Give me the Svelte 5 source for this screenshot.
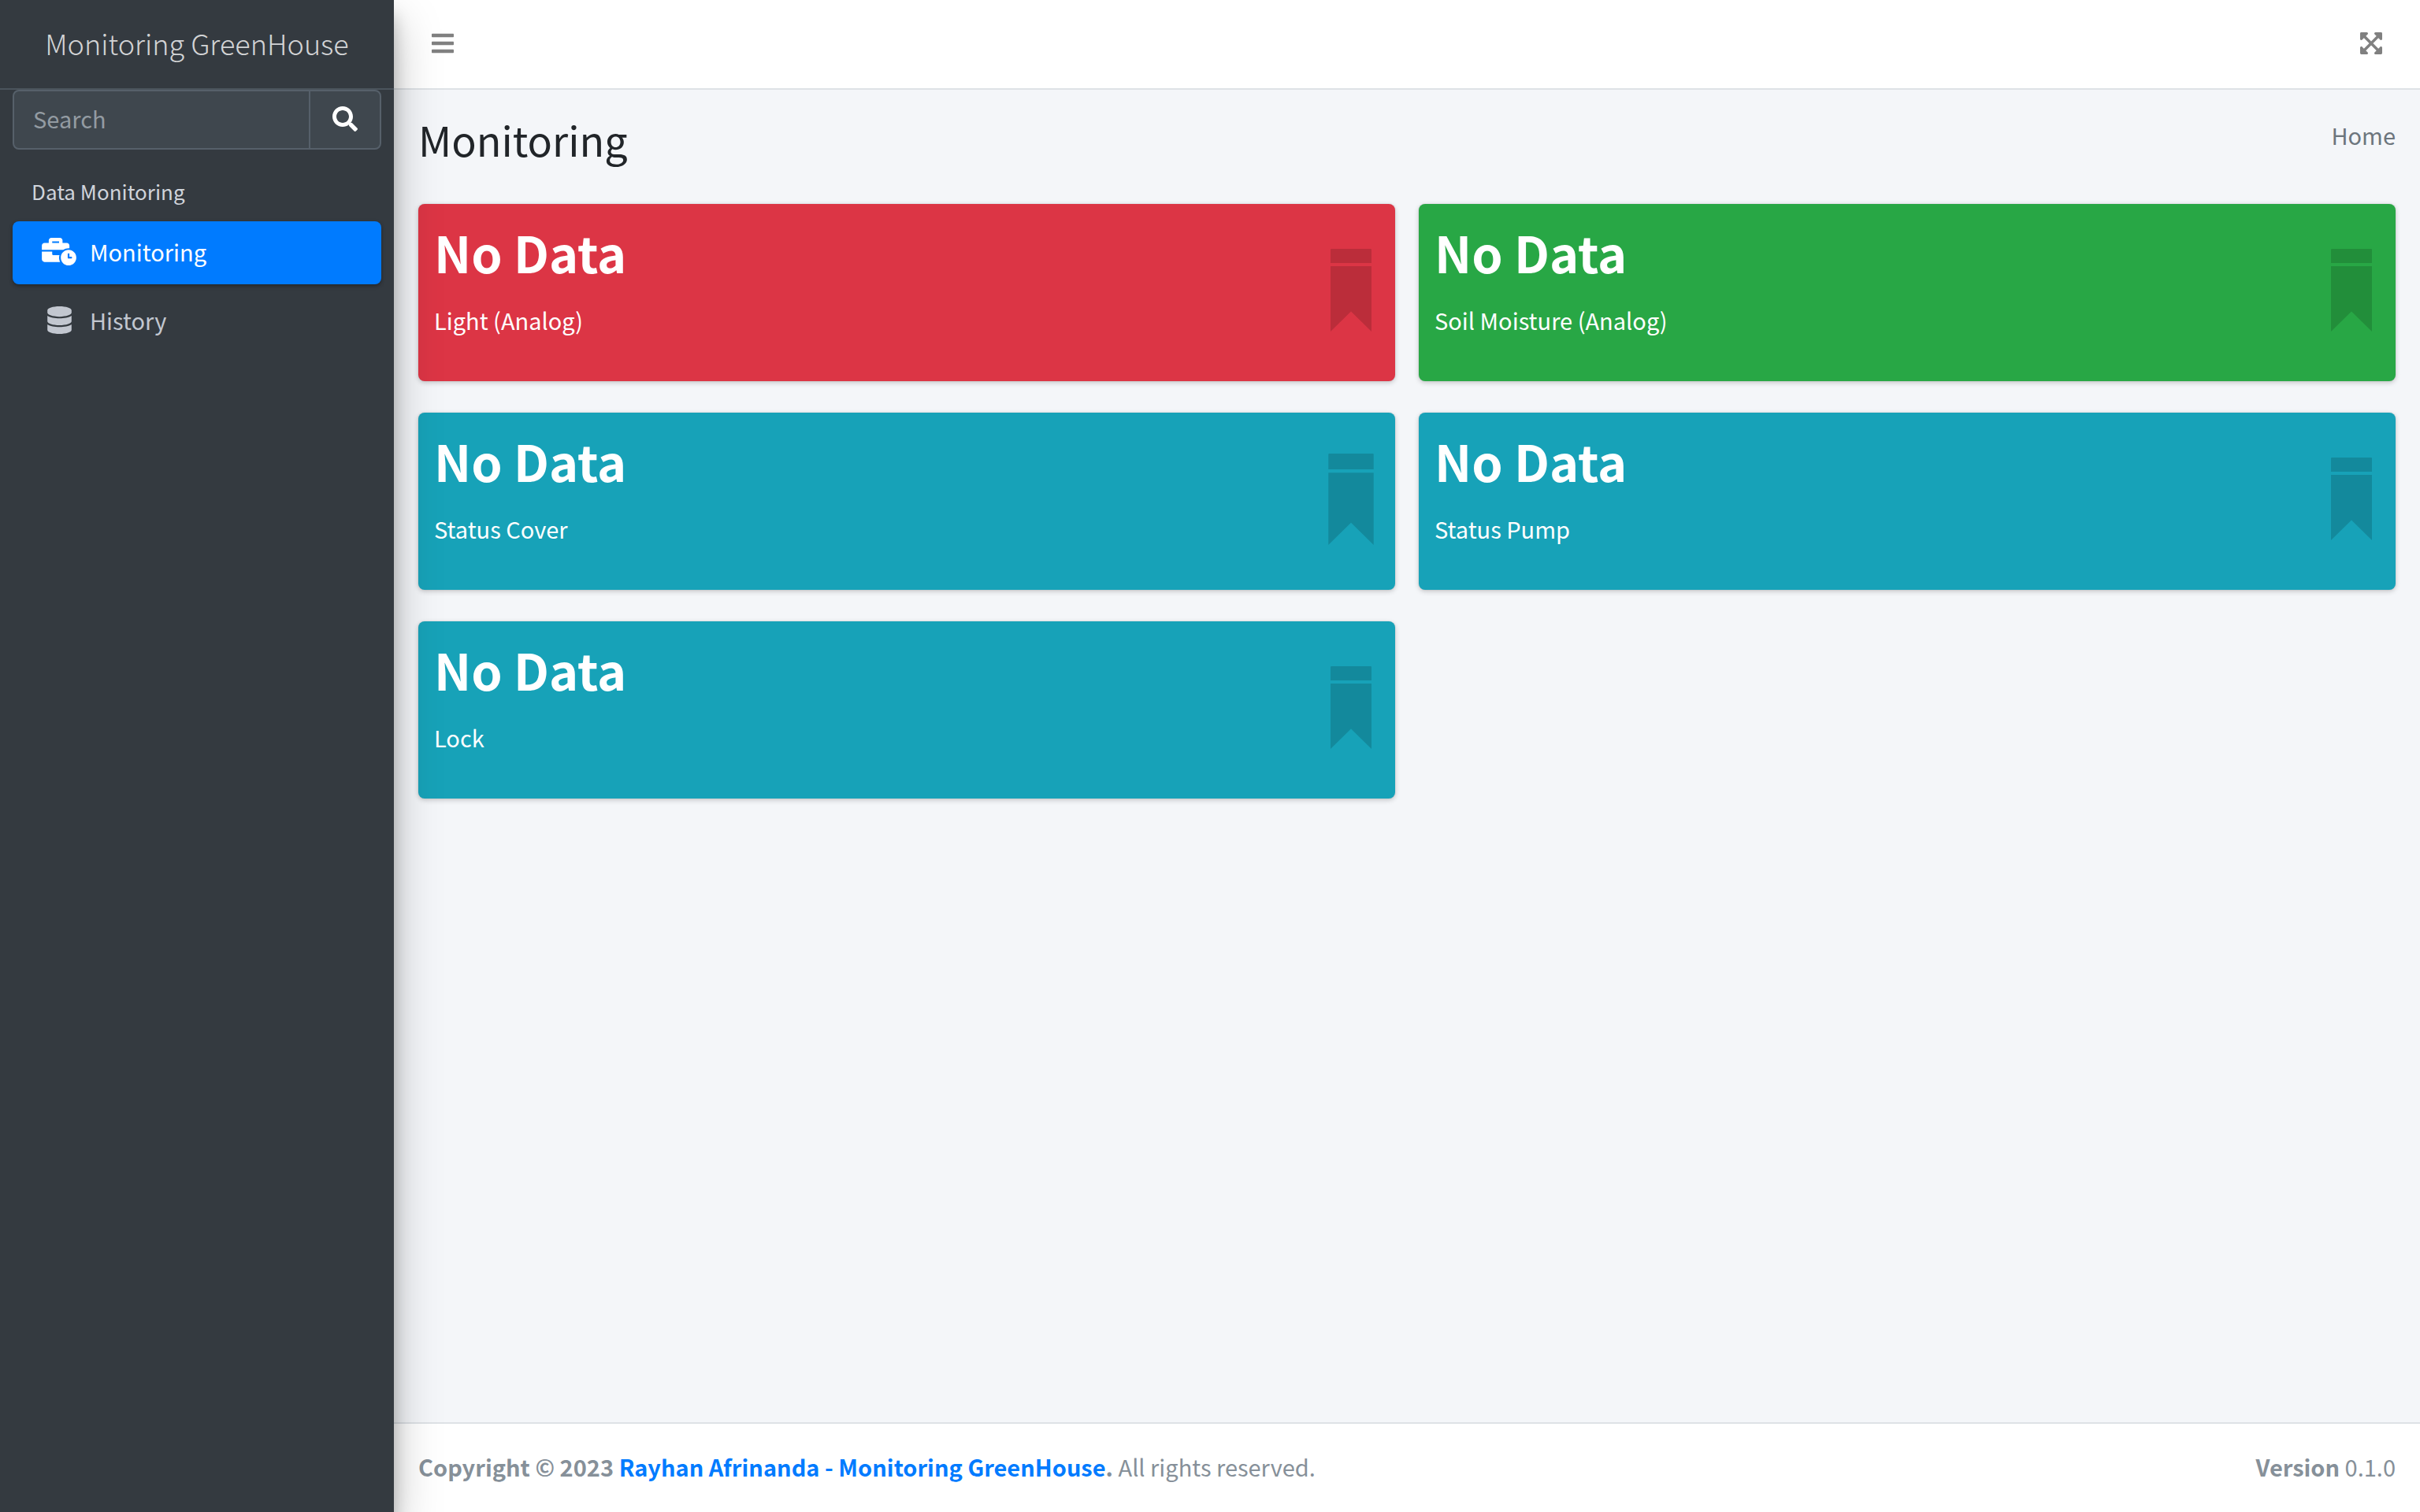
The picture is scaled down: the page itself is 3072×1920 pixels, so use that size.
<script>
  const cards = [
    { value: 'No Data', label: 'Light (Analog)', tone: 'danger' },
    { value: 'No Data', label: 'Soil Moisture (Analog)', tone: 'success' },
    { value: 'No Data', label: 'Status Cover', tone: 'info', enlarged: true },
    { value: 'No Data', label: 'Status Pump', tone: 'info' },
    { value: 'No Data', label: 'Lock', tone: 'info' }
  ];
</script>

<div class="wrapper">
  <aside class="sidebar">
    <a class="brand" href="#home">Monitoring GreenHouse</a>
    <div class="sidebar-body">
      <form class="search" role="search">
        <input type="search" placeholder="Search" aria-label="Search" />
        <button type="button" aria-label="Submit search">
          <svg class="icon-search" viewBox="0 0 512 512" aria-hidden="true"><path d="M505 442.700L405.300 343c-4.500-4.500-10.600-7-17-7H372c27.600-35.300 44-79.700 44-128C416 93.100 322.900 0 208 0S0 93.100 0 208s93.100 208 208 208c48.300 0 92.700-16.400 128-44v16.300c0 6.400 2.500 12.500 7 17l99.700 99.700c9.400 9.400 24.600 9.400 33.900 0l28.300-28.300c9.400-9.400 9.400-24.600.1-34zM208 336c-70.700 0-128-57.200-128-128 0-70.700 57.200-128 128-128 70.700 0 128 57.200 128 128 0 70.700-57.200 128-128 128z" /></svg>
        </button>
      </form>
      <nav aria-label="Data Monitoring">
        <h2 class="nav-header">Data Monitoring</h2>
        <ul>
          <li>
            <a class="nav-link active" href="#monitoring" aria-current="page">
              <span class="nav-icon"><svg class="icon-wide" viewBox="0 0 640 512" aria-hidden="true"><path d="M496 224c-79.590 0-144 64.410-144 144s64.410 144 144 144 144-64.410 144-144-64.410-144-144-144zm64 150.290c0 5.340-4.370 9.710-9.710 9.710h-60.570c-5.340 0-9.710-4.370-9.710-9.710v-76.570c0-5.340 4.370-9.710 9.710-9.710h12.570c5.340 0 9.710 4.370 9.710 9.710V352h38.290c5.340 0 9.710 4.370 9.710 9.710v12.580zM496 192c5.400 0 10.720.33 16 .81V144c0-25.600-22.400-48-48-48h-80V48c0-25.600-22.400-48-48-48H176c-25.600 0-48 22.400-48 48v48H48c-25.600 0-48 22.400-48 48v80h395.120c28.600-20.090 63.350-32 100.880-32zM320 96H192V64h128v32zm6.820 224H208c-8.840 0-16-7.160-16-16v-48H0v144c0 25.600 22.400 48 48 48h291.430C327.100 423.960 320 396.820 320 368c0-16.660 2.480-32.720 6.820-48z" /></svg></span>
              <span>Monitoring</span>
            </a>
          </li>
          <li>
            <a class="nav-link" href="#history">
              <span class="nav-icon"><svg class="icon-db" viewBox="0 0 448 512" aria-hidden="true"><path d="M448 73.143v45.714C448 159.143 347.667 192 224 192S0 159.143 0 118.857V73.143C0 32.857 100.333 0 224 0s224 32.857 224 73.143zM448 176v102.857C448 319.143 347.667 352 224 352S0 319.143 0 278.857V176c48.125 33.143 136.208 48.572 224 48.572S399.874 209.143 448 176zm0 160v102.857C448 479.143 347.667 512 224 512S0 479.143 0 438.857V336c48.125 33.143 136.208 48.572 224 48.572S399.874 369.143 448 336z" /></svg></span>
              <span>History</span>
            </a>
          </li>
        </ul>
      </nav>
    </div>
  </aside>

  <div class="page">
    <header class="topbar">
      <button type="button" aria-label="Toggle menu">
        <svg class="icon-bar" viewBox="0 0 448 512" aria-hidden="true"><path d="M16 132h416c8.837 0 16-7.163 16-16V76c0-8.837-7.163-16-16-16H16C7.163 60 0 67.163 0 76v40c0 8.837 7.163 16 16 16zm0 160h416c8.837 0 16-7.163 16-16v-40c0-8.837-7.163-16-16-16H16c-8.837 0-16 7.163-16 16v40c0 8.837 7.163 16 16 16zm0 160h416c8.837 0 16-7.163 16-16v-40c0-8.837-7.163-16-16-16H16c-8.837 0-16 7.163-16 16v40c0 8.837 7.163 16 16 16z" /></svg>
      </button>
      <button type="button" aria-label="Toggle full screen">
        <svg class="icon-bar" viewBox="0 0 448 512" aria-hidden="true"><path d="M448 344v112a23.940 23.940 0 0 1-24 24H312c-21.390 0-32.090-25.900-17-41l36.200-36.200L224 295.600 116.770 402.900 153 439c15.090 15.100 4.390 41-17 41H24a23.940 23.940 0 0 1-24-24V344c0-21.400 25.890-32.100 41-17l36.190 36.200L184.460 256 77.180 148.700 41 185c-15.100 15.100-41 4.400-41-17V56a23.940 23.940 0 0 1 24-24h112c21.390 0 32.090 25.900 17 41l-36.200 36.200L224 216.400l107.230-107.300L295 73c-15.090-15.100-4.390-41 17-41h112a23.940 23.940 0 0 1 24 24v112c0 21.400-25.890 32.100-41 17l-36.190-36.200L263.540 256l107.280 107.300L407 327.100c15.100-15.200 41-4.500 41 16.900z" /></svg>
      </button>
    </header>

    <main>
      <div class="content-header">
        <h1>Monitoring</h1>
        <nav aria-label="Breadcrumb"><a href="#home">Home</a></nav>
      </div>
      <div class="cards">
        {#each cards as card}
          <section class="card {card.tone}">
            <div>
              <h3>{card.value}</h3>
              <p>{card.label}</p>
            </div>
            <span class="card-icon">
              <svg class:enlarged={card.enlarged} viewBox="0 0 52 105" aria-hidden="true"><path d="M0 1q0-1 1-1h50q1 0 1 1v17H0zM0 22h52v83L26 79.500 0 105z" /></svg>
            </span>
          </section>
        {/each}
      </div>
    </main>

    <footer>
      <div><strong>Copyright © 2023 <a href="#author">Rayhan Afrinanda - Monitoring GreenHouse</a>.</strong> All rights reserved.</div>
      <div><b>Version</b> 0.1.0</div>
    </footer>
  </div>
</div>

<style>
  :global(body) {
    margin: 0;
    background: #f4f6f9;
  }
  .wrapper {
    display: flex;
    min-height: 100vh;
    font-family: 'Noto Sans CJK JP', 'Noto Sans', sans-serif;
    font-size: 29px;
    line-height: 48px;
    color: #212529;
  }
  .wrapper * {
    box-sizing: border-box;
  }
  svg {
    display: block;
    fill: currentColor;
  }
  a {
    text-decoration: none;
  }
  button {
    display: flex;
    align-items: center;
    justify-content: center;
    border: 0;
    background: none;
    cursor: pointer;
  }
  h1, h2, h3, p, ul {
    margin: 0;
    padding: 0;
    font-weight: 400;
    list-style: none;
  }

  .sidebar {
    position: relative;
    z-index: 2;
    flex: 0 0 500px;
    background: #343a40;
    box-shadow: 0 28px 56px rgba(0, 0, 0, 0.25), 0 20px 20px rgba(0, 0, 0, 0.22);
  }
  .brand {
    display: block;
    height: 114px;
    border-bottom: 2px solid #4b545c;
    font-size: 36px;
    font-weight: 300;
    line-height: 108px;
    text-align: center;
    color: rgba(255, 255, 255, 0.8);
  }
  .sidebar-body {
    padding: 0 16px;
  }
  .search {
    display: flex;
    height: 76px;
    border: 2px solid #56606a;
    border-radius: 8px;
    background: #3f474e;
    overflow: hidden;
  }
  .search input {
    flex: 1;
    min-width: 0;
    padding: 0 24px 4px;
    border: 0;
    background: none;
    font: inherit;
    color: #fff;
    outline: 0;
  }
  .search input::placeholder {
    color: #939ba2;
    opacity: 1;
  }
  .search button {
    width: 90px;
    padding: 0 0 2px;
    border-left: 2px solid #56606a;
    color: #fff;
  }
  .icon-search {
    width: 32px;
    height: 32px;
  }
  .nav-header {
    padding: 33px 24px 18px;
    font-size: 26px;
    line-height: 40px;
    color: #d0d4db;
  }
  ul {
    display: grid;
    gap: 7px;
  }
  .nav-link {
    display: flex;
    gap: 12px;
    padding: 14px 32px 18px;
    border-radius: 8px;
    color: #c2c7d0;
  }
  .nav-link.active {
    background: #007bff;
    color: #fff;
    box-shadow: 0 2px 6px rgba(0, 0, 0, 0.12), 0 2px 4px rgba(0, 0, 0, 0.24);
  }
  .nav-icon {
    display: flex;
    align-items: center;
    justify-content: center;
    width: 54px;
  }
  .icon-wide {
    width: 44px;
    height: 35px;
  }
  .icon-db {
    width: 31px;
    height: 35px;
  }

  .page {
    display: flex;
    flex: 1;
    flex-direction: column;
    min-width: 0;
  }
  .topbar {
    display: flex;
    align-items: center;
    justify-content: space-between;
    height: 114px;
    padding: 0 16px;
    border-bottom: 2px solid #dee2e6;
    background: #fff;
  }
  .topbar button {
    padding: 24px 32px 26px;
    color: #808080;
  }
  .icon-bar {
    width: 28px;
    height: 32px;
  }
  main {
    flex: 1;
    padding: 30px 31px;
  }
  .content-header {
    display: flex;
    justify-content: space-between;
    padding-bottom: 49px;
  }
  h1 {
    font-size: 52px;
    line-height: 66px;
  }
  .content-header nav {
    line-height: 54px;
  }
  .content-header a {
    color: #6c757d;
  }
  .cards {
    display: grid;
    grid-template-columns: 1fr 1fr;
    gap: 40px 30px;
  }
  .card {
    display: flex;
    align-items: center;
    justify-content: space-between;
    min-height: 225px;
    padding: 20px;
    border-radius: 8px;
    color: #fff;
    box-shadow: 0 0 2px rgba(0, 0, 0, 0.13), 0 2px 6px rgba(0, 0, 0, 0.2);
  }
  .danger {
    background: #dc3545;
  }
  .success {
    background: #28a745;
  }
  .info {
    background: #17a2b8;
  }
  .card > div {
    align-self: flex-start;
  }
  h3 {
    margin-bottom: 22px;
    font-size: 63px;
    font-weight: 700;
    line-height: 81px;
  }
  .card-icon {
    display: flex;
    justify-content: center;
    width: 72px;
    padding-bottom: 6px;
    color: rgba(0, 0, 0, 0.15);
  }
  .card-icon svg {
    width: 52px;
    height: 105px;
  }
  .card-icon svg.enlarged {
    width: 58px;
    height: 116px;
  }
  footer {
    display: flex;
    justify-content: space-between;
    padding: 30px 31px 34px;
    border-top: 2px solid #dee2e6;
    background: #fff;
    color: #869099;
  }
  footer a {
    color: #007bff;
  }
</style>
